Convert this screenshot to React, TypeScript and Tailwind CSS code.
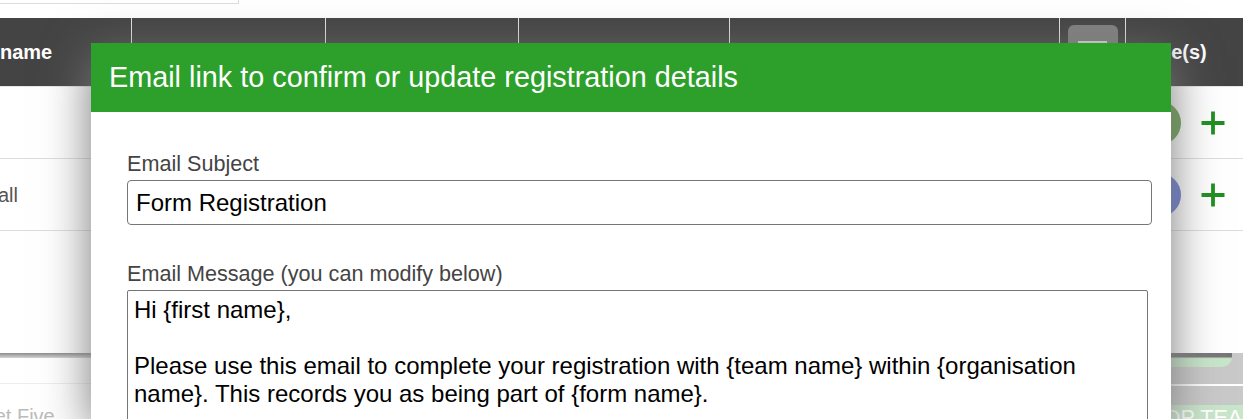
function PlusIcon() {
  return (
    <svg width="24" height="24" viewBox="0 0 24 24" className="block">
      <path d="M12 0.5v23M0.5 12h23" stroke="#1f8f1f" strokeWidth="3.8" fill="none" />
    </svg>
  );
}

function HeaderCell({ className, children }: { className: string; children?: React.ReactNode }) {
  return <div className={`h-full shrink-0 border-r border-[#e4e4e4] ${className}`}>{children}</div>;
}

function Row({ text, colour }: { text: string; colour: string }) {
  return (
    <div className="flex h-[72px] items-center justify-between border-b border-[#dddddd]">
      <span className="ml-[-2px] text-[20px] text-[#555555]">{text}</span>
      <div className="flex items-center">
        <div className={`h-[44px] w-[44px] rounded-full ${colour}`} />
        <div className="ml-[20px] mr-[18px]">
          <PlusIcon />
        </div>
      </div>
    </div>
  );
}

export default function App() {
  return (
    <div className="relative h-[419px] w-[1243px] overflow-hidden bg-white font-['Liberation_Sans',Arial,sans-serif]">
      <div className="h-[18px]">
        <div className="h-[4px] w-[239px] border-r border-b border-[#dddddd]" />
      </div>

      <div className="flex h-[68px] items-center bg-[#444444] text-[20px] font-bold text-white">
        <HeaderCell className="flex w-[132px] items-center overflow-hidden">
          <span>name</span>
        </HeaderCell>
        <HeaderCell className="w-[194px]" />
        <HeaderCell className="w-[193px]" />
        <HeaderCell className="w-[211px]" />
        <HeaderCell className="w-[330px]" />
        <HeaderCell className="flex w-[66px] items-start justify-center pt-[7px]">
          <div className="flex h-[40px] w-[50px] justify-center rounded-[6px] bg-[#818181] pt-[16px]">
            <div className="h-[3px] w-[29px] bg-[#dddddd]" />
          </div>
        </HeaderCell>
        <div className="flex-1 pl-[13px] whitespace-nowrap">Role(s)</div>
      </div>

      <div className="h-[267px] overflow-hidden border-t border-[#e6e6e6]">
        <Row text="" colour="bg-[#6a9f4e]" />
        <Row text="all" colour="bg-[#6577d2]" />
      </div>

      <div className="flex h-[66px] items-start overflow-hidden">
        <div className="w-[1000px] shrink-0">
          <div className="h-[31px] border-b border-[#eeeeee]">
            <div className="flex h-[5px] gap-[22px] overflow-hidden bg-gradient-to-b from-[#8c8c8c] to-[#d4d4d4] pl-[20px]">
              <span className="mt-[-18px] text-[20px] leading-[23px] text-[#777777]">Grab</span>
              <span className="mt-[-18px] text-[20px] leading-[23px] text-[#777777]">Go</span>
            </div>
          </div>
          <div className="pt-[21px] text-[20px] leading-[23px] whitespace-nowrap text-[#bbbbbb]">
            <span className="ml-[-42px] inline-block">Street Five</span>
          </div>
        </div>
        <div className="h-full min-w-0 flex-1 bg-[#c9c9c9]">
          <div className="mr-[11px] h-[14px] overflow-hidden rounded-br-[10px] bg-gradient-to-b from-[#777777] from-[25%] to-[#c8e6c9] to-[40%]" />
          <div className="mt-[17px] h-[2px] bg-[#ffffff]" />
          <div className="mt-[19px] h-[14px] overflow-hidden bg-[#c8e6c9] pl-[165px] text-[21.6px] leading-[26px] whitespace-nowrap text-white">
            DP TEAM
          </div>
        </div>
      </div>

      <div className="absolute top-[43px] left-[91px] h-[376px] w-[1080px] bg-white shadow-[0_12px_45px_#777777]">
        <div className="flex h-[69px] items-center bg-[#2ca02a] px-[18px] text-[28.8px] text-white">
          Email link to confirm or update registration details
        </div>
        <div className="pt-[38px] pl-[36px]">
          <label className="block h-[30px] text-[21.6px] leading-[28px] text-[#444444]">Email Subject</label>
          <input
            readOnly
            value="Form Registration"
            className="block h-[45px] w-[1025px] rounded-[4px] border border-[#767676] px-[8px] text-[24px] text-black outline-none"
          />
          <label className="mt-[35px] block h-[30px] text-[21.6px] leading-[28px] text-[#444444]">
            Email Message (you can modify below)
          </label>
          <textarea
            readOnly
            rows={6}
            value={"Hi {first name},\n\nPlease use this email to complete your registration with {team name} within {organisation\nname}. This records you as being part of {form name}."}
            className="block w-[1021px] resize-none rounded-[2px] border border-[#767676] px-[6px] pt-[5px] text-[24px] leading-[28px] text-black outline-none"
          />
        </div>
      </div>
    </div>
  );
}
